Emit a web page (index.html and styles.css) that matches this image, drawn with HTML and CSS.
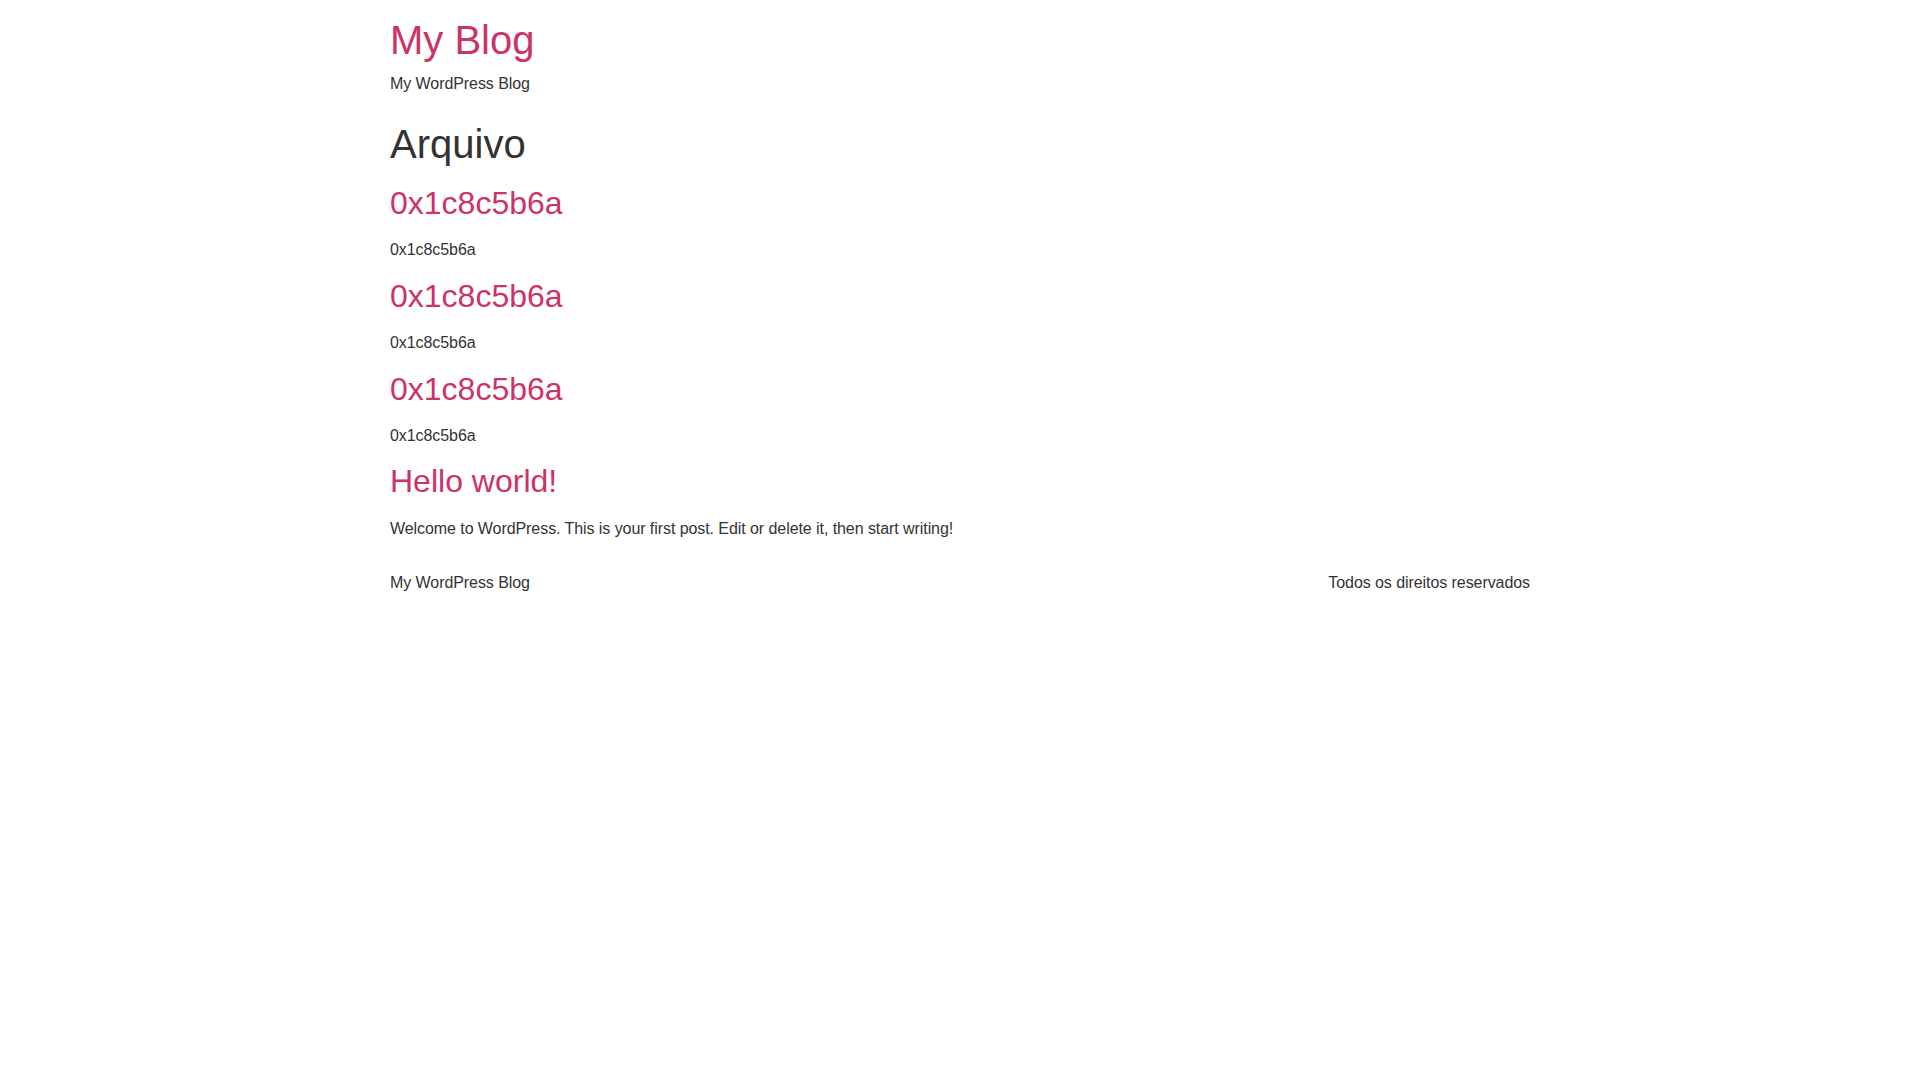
FILE: index.html
```html
<!DOCTYPE html>
<html lang="pt-BR">
<head>
  <meta charset="UTF-8">
  <meta name="viewport" content="width=device-width, initial-scale=1.0">
  <title>Arquivo – My Blog</title>
  <link rel="stylesheet" href="styles.css">
</head>
<body>
  <!-- Cabeçalho -->
  <header class="site-header">
    <div class="site-branding">
      <h1 class="site-title"><a href="#">My Blog</a></h1>
      <p class="site-description">My WordPress Blog</p>
    </div>
  </header>

  <!-- Arquivo de posts -->
  <main class="site-main">
    <header class="page-header">
      <h1 class="entry-title">Arquivo</h1>
    </header>
    <div class="page-content">
      <article class="post">
        <h2 class="entry-title"><a href="#">0x1c8c5b6a</a></h2>
        <p>0x1c8c5b6a</p>
      </article>
      <article class="post">
        <h2 class="entry-title"><a href="#">0x1c8c5b6a</a></h2>
        <p>0x1c8c5b6a</p>
      </article>
      <article class="post">
        <h2 class="entry-title"><a href="#">0x1c8c5b6a</a></h2>
        <p>0x1c8c5b6a</p>
      </article>
      <article class="post">
        <h2 class="entry-title"><a href="#">Hello world!</a></h2>
        <p>Welcome to WordPress. This is your first post. Edit or delete it, then start writing!</p>
      </article>
    </div>
  </main>

  <!-- Rodapé -->
  <footer class="site-footer">
    <div class="footer-inner">
      <p class="site-description">My WordPress Blog</p>
      <div class="copyright">
        <p>Todos os direitos reservados</p>
      </div>
    </div>
  </footer>
</body>
</html>
```

FILE: styles.css
```css
/* Base */
html {
  line-height: 1.15;
}
body {
  margin: 0;
  font-family: "Liberation Sans", Arial, sans-serif;
  font-size: 16px;
  font-weight: 400;
  line-height: 1.5;
  letter-spacing: -0.07px;
  color: #333;
  background: #fff;
}
a {
  color: #c36;
  text-decoration: none;
}
h1, h2 {
  margin: 8px 0 16px;
  font-weight: 500;
  line-height: 1.2;
  letter-spacing: normal;
}
h1 { font-size: 40px; }
h2 { font-size: 32px; }
p {
  margin: 0 0 14.4px;
}

/* Containers */
.site-header,
.site-main,
.site-footer {
  max-width: 1140px;
  margin: 0 auto;
}

/* Cabeçalho */
.site-header {
  padding: 16px 0;
}
.site-header .site-title {
  margin: 0 0 8px;
}
.site-description {
  margin: 0;
}

/* Rodapé */
.site-footer {
  padding: 16px 0;
}
.footer-inner {
  display: flex;
  justify-content: space-between;
  align-items: center;
}
.copyright p {
  margin: 0;
}
```
